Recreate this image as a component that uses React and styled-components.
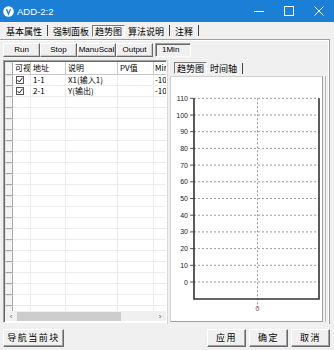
import React from "react";
import styled, { createGlobalStyle } from "styled-components";

const GlobalStyle = createGlobalStyle`
  html, body {
    margin: 0;
    padding: 0;
    background: #f0f0f0;
  }
  * {
    box-sizing: border-box;
  }
`;

const CJK = `"Noto Sans CJK SC", "Liberation Sans", sans-serif`;
const LATIN = `"Liberation Sans", "Noto Sans CJK SC", sans-serif`;

const Window = styled.div`
  width: 334px;
  height: 350px;
  display: flex;
  flex-direction: column;
  background: #f0f0f0;
  overflow: hidden;
  color: #000;
`;

const TitleBar = styled.div`
  height: 22px;
  flex: none;
  display: flex;
  align-items: center;
  background: #1a7fd5;
  color: #fff;
`;

const TitleIcon = styled.div`
  width: 17px;
  padding-left: 3px;
  display: flex;
  align-items: center;
`;

const TitleText = styled.div`
  font-family: ${LATIN};
  font-size: 9.5px;
`;

const Controls = styled.div`
  margin-left: auto;
  display: flex;
`;

const CtrlButton = styled.div`
  width: 30px;
  height: 22px;
  display: flex;
  align-items: center;
  justify-content: center;
`;

const TabStrip = styled.div`
  height: 17px;
  flex: none;
  display: flex;
  align-items: center;
  padding-left: 3px;
  font-family: ${CJK};
  font-size: 9px;
`;

const Tab = styled.div`
  height: 12px;
  line-height: 11px;
  padding: 0 2px;
  border: 1px solid ${(p) => (p.$active ? "#7a7a7a" : "transparent")};
  border-right-color: ${(p) => (p.$active ? "#fff" : "transparent")};
  border-bottom-color: ${(p) => (p.$active ? "#fff" : "transparent")};
`;

const Sep = styled.div`
  width: 1px;
  height: 11px;
  background: #444;
  margin: 0 2px;
`;

const Panel = styled.div`
  height: 285px;
  flex: none;
  margin-right: 4px;
  padding-left: 3px;
  border-top: 1px solid #a0a0a0;
  border-right: 1px solid #a0a0a0;
  box-shadow: inset 0 1px #fff, inset -1px 0 #fff;
  display: flex;
  flex-direction: column;
`;

const Toolbar = styled.div`
  height: 20px;
  flex: none;
  display: flex;
  align-items: flex-start;
  padding-top: 3px;
`;

const ToolButton = styled.div`
  width: ${(p) => p.$w}px;
  height: 14px;
  font-family: ${LATIN};
  font-size: 8px;
  line-height: 12px;
  text-align: center;
  white-space: nowrap;
  background: #f0f0f0;
  border: 1px solid;
  border-color: #fff #696969 #696969 #fff;
  box-shadow: inset -1px -1px #c8c8c8;
`;

const TimeBox = styled.div`
  width: 36px;
  height: 14px;
  margin-left: 2px;
  padding-left: 6px;
  font-family: ${LATIN};
  font-size: 8px;
  line-height: 12px;
  border: 1px solid;
  border-color: #a0a0a0 #fff #fff #a0a0a0;
  box-shadow: inset 1px 1px #696969;
`;

const Content = styled.div`
  flex: 1;
  display: flex;
  min-height: 0;
`;

const GridBox = styled.div`
  width: 164px;
  height: 263px;
  flex: none;
  display: flex;
  flex-direction: column;
  background: #fff;
  border: 1px solid;
  border-color: #a0a0a0 #fff #fff #a0a0a0;
  box-shadow: inset 1px 1px #696969;
  padding: 1px 0 0 1px;
  overflow: hidden;
`;

const Rows = styled.div`
  flex: 1;
  overflow: hidden;
`;

const Row = styled.div`
  display: grid;
  grid-template-columns: 8px 18px 35px 52px 36px 40px;
  height: ${(p) => (p.$head ? 13 : 11)}px;
  font-family: ${CJK};
  font-size: 8px;
  line-height: ${(p) => (p.$head ? 12 : 10)}px;
`;

const RowHead = styled.div`
  background: #f4f4f4;
  border: 1px solid #a8a8a8;
  border-top-color: #e6e6e6;
  border-left-color: #e6e6e6;
`;

const Cell = styled.div`
  padding-left: ${(p) => (p.$tight ? 1 : 2)}px;
  white-space: nowrap;
  overflow: hidden;
  border-right: 1px solid ${(p) => (p.$head ? "#c8c8c8" : "#ececec")};
  border-bottom: 1px solid ${(p) => (p.$head ? "#c8c8c8" : "#ececec")};
  display: flex;
  align-items: center;
`;

const Check = styled.div`
  width: 8px;
  height: 8px;
  margin-left: 1px;
  border: 1px solid #555;
  background: #fff;
  display: flex;
  align-items: center;
  justify-content: center;
`;

const HScroll = styled.div`
  height: 10px;
  flex: none;
  display: flex;
  align-items: center;
  background: #f0f0f0;
  margin-bottom: 1px;
  font-family: ${LATIN};
  font-size: 8px;
  color: #606060;
`;

const Arrow = styled.div`
  width: 12px;
  text-align: center;
`;

const Thumb = styled.div`
  width: 104px;
  height: 9px;
  background: #cdcdcd;
`;

const RightPanel = styled.div`
  flex: 1;
  display: flex;
  flex-direction: column;
  padding: 0 0 2px 2px;
  border-left: 1px solid #d8d8d8;
`;

const InnerTabs = styled.div`
  height: 16px;
  flex: none;
  display: flex;
  align-items: flex-end;
  padding: 0 0 2px 4px;
  font-family: ${CJK};
  font-size: 9px;
`;

const ChartWell = styled.div`
  flex: 1;
  background: #fff;
  border: 1px solid;
  border-color: #d0d0d0 #a0a0a0 #a0a0a0 #d0d0d0;
  box-shadow: 2px 0 #f0f0f0, 3px 0 #b8b8b8, 5px 0 #f0f0f0;
  margin-right: 6px;
  overflow: hidden;
`;

const Footer = styled.div`
  flex: 1;
  display: flex;
  align-items: center;
  padding: 2px 4px 0 3px;
`;

const Button = styled.div`
  width: ${(p) => p.$w}px;
  height: 18px;
  margin-left: ${(p) => p.$ml || 0}px;
  font-family: ${CJK};
  font-size: 9px;
  letter-spacing: 1.5px;
  line-height: 15px;
  text-align: center;
  background: #f0f0f0;
  border: 1px solid;
  border-color: #fff #696969 #696969 #fff;
  box-shadow: inset -1px -1px #a0a0a0;
`;

const Spacer = styled.div`
  flex: 1;
`;

const ChartSvg = styled.svg`
  display: block;
`;

function Chart() {
  const ticks = [];
  for (let v = 0; v <= 110; v += 10) ticks.push(v);
  const y = (v) => 205 - v * 1.67;
  return (
    <ChartSvg width="150" height="244" viewBox="0 0 150 244">
      {ticks.map((v) => (
        <g key={v}>
          <line
            x1="23"
            x2="148"
            y1={y(v)}
            y2={y(v)}
            stroke="#9a9a9a"
            strokeDasharray="2 2"
            strokeWidth="1"
          />
          <line x1="19" x2="23" y1={y(v)} y2={y(v)} stroke="#555" />
          <text
            x="17"
            y={y(v) + 2.5}
            fontSize="7"
            fontFamily="Liberation Sans, sans-serif"
            textAnchor="end"
            fill="#222"
          >
            {v}
          </text>
        </g>
      ))}
      <line
        x1="86.5"
        x2="86.5"
        y1={y(110)}
        y2="232"
        stroke="#9a9a9a"
        strokeDasharray="2 2"
      />
      <path
        d={`M23 ${y(110)} V222 H148 V${y(110)}`}
        fill="none"
        stroke="#333"
        strokeWidth="1.6"
      />
      <text
        x="86.5"
        y="234"
        fontSize="7"
        fontFamily="Liberation Sans, sans-serif"
        textAnchor="middle"
        fill="#a03a2a"
      >
        0
      </text>
    </ChartSvg>
  );
}

function CheckMark() {
  return (
    <svg width="6" height="6" viewBox="0 0 6 6">
      <path d="M0.5 3 L2.3 5 L5.5 0.8" fill="none" stroke="#222" strokeWidth="1" />
    </svg>
  );
}

const data = [
  { on: true, addr: "1-1", desc: "X1(输入1)", mi: "-10" },
  { on: true, addr: "2-1", desc: "Y(输出)", mi: "-10" },
];

export default function App() {
  const empty = Array.from({ length: 20 });
  return (
    <Window>
      <GlobalStyle />
      <TitleBar>
        <TitleIcon>
          <svg width="11" height="11" viewBox="0 0 11 11">
            <circle cx="5.5" cy="5.5" r="5.3" fill="#fff" />
            <path d="M3.5 3 L5.5 8 L7.5 3" fill="none" stroke="#1a7fd5" strokeWidth="1.3" />
          </svg>
        </TitleIcon>
        <TitleText>ADD-2:2</TitleText>
        <Controls>
          <CtrlButton>
            <svg width="10" height="10" viewBox="0 0 10 10">
              <line x1="0" x2="10" y1="5.5" y2="5.5" stroke="#fff" />
            </svg>
          </CtrlButton>
          <CtrlButton>
            <svg width="10" height="10" viewBox="0 0 10 10">
              <rect x="0.5" y="0.5" width="9" height="9" fill="none" stroke="#fff" />
            </svg>
          </CtrlButton>
          <CtrlButton>
            <svg width="10" height="10" viewBox="0 0 10 10">
              <path d="M0.5 0.5 L9.5 9.5 M9.5 0.5 L0.5 9.5" stroke="#fff" />
            </svg>
          </CtrlButton>
        </Controls>
      </TitleBar>

      <TabStrip>
        <Tab>基本属性</Tab>
        <Sep />
        <Tab>强制面板</Tab>
        <Tab $active>趋势图</Tab>
        <Tab>算法说明</Tab>
        <Sep />
        <Tab>注释</Tab>
        <Sep />
      </TabStrip>

      <Panel>
        <Toolbar>
          <ToolButton $w={37}>Run</ToolButton>
          <ToolButton $w={37}>Stop</ToolButton>
          <ToolButton $w={39}>ManuScal</ToolButton>
          <ToolButton $w={37}>Output</ToolButton>
          <TimeBox>1Min</TimeBox>
        </Toolbar>

        <Content>
          <GridBox>
            <Rows>
              <Row $head>
                <RowHead />
                <Cell $head>可视</Cell>
                <Cell $head>地址</Cell>
                <Cell $head>说明</Cell>
                <Cell $head>PV值</Cell>
                <Cell $head $tight>Min</Cell>
              </Row>
              {data.map((d) => (
                <Row key={d.addr}>
                  <RowHead />
                  <Cell>
                    <Check>{d.on && <CheckMark />}</Check>
                  </Cell>
                  <Cell>{d.addr}</Cell>
                  <Cell>{d.desc}</Cell>
                  <Cell />
                  <Cell $tight>{d.mi}</Cell>
                </Row>
              ))}
              {empty.map((_, i) => (
                <Row key={i}>
                  <RowHead />
                  <Cell />
                  <Cell />
                  <Cell />
                  <Cell />
                  <Cell />
                </Row>
              ))}
            </Rows>
            <HScroll>
              <Arrow>‹</Arrow>
              <Thumb />
              <Spacer />
              <Arrow>›</Arrow>
            </HScroll>
          </GridBox>

          <RightPanel>
            <InnerTabs>
              <Tab $active>趋势图</Tab>
              <Tab>时间轴</Tab>
              <Sep />
            </InnerTabs>
            <ChartWell>
              <Chart />
            </ChartWell>
          </RightPanel>
        </Content>
      </Panel>

      <Footer>
        <Button $w={61}>导航当前块</Button>
        <Spacer />
        <Button $w={39}>应用</Button>
        <Button $w={39} $ml={3}>确定</Button>
        <Button $w={39} $ml={3}>取消</Button>
      </Footer>
    </Window>
  );
}
